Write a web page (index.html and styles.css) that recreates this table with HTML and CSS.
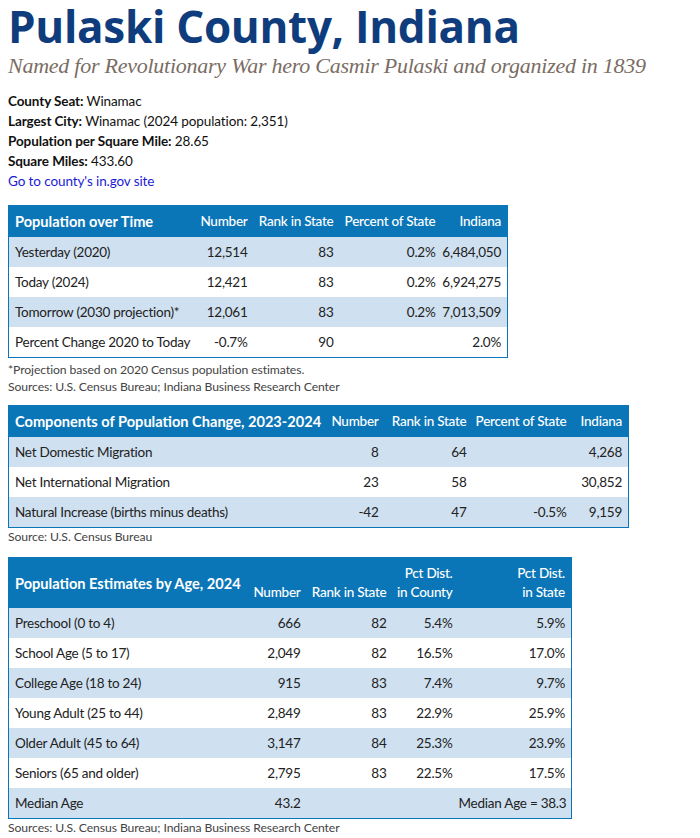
FILE: index.html
```html
<!DOCTYPE html>
<html lang="en">
<head>
<meta charset="utf-8">
<title>Pulaski County, Indiana</title>
<link rel="stylesheet" href="styles.css">
</head>
<body>
<h1 class="title">Pulaski County, Indiana</h1>
<p class="subtitle">Named for Revolutionary War hero Casmir Pulaski and organized in 1839</p>

<div class="facts">
  <div class="fact"><b>County Seat:</b> Winamac</div>
  <div class="fact"><b>Largest City:</b> Winamac (2024 population: 2,351)</div>
  <div class="fact"><b>Population per Square Mile:</b> 28.65</div>
  <div class="fact"><b>Square Miles:</b> 433.60</div>
  <div class="fact"><a class="link" href="#">Go to county's in.gov site</a></div>
</div>

<table class="data t1">
  <colgroup><col class="c1-0"><col class="c1-1"><col class="c1-2"><col class="c1-3"><col class="c1-4"></colgroup>
  <thead>
    <tr><th class="lead">Population over Time</th><th>Number</th><th>Rank in State</th><th>Percent of State</th><th>Indiana</th></tr>
  </thead>
  <tbody>
    <tr><td>Yesterday (2020)</td><td>12,514</td><td>83</td><td>0.2%</td><td>6,484,050</td></tr>
    <tr><td>Today (2024)</td><td>12,421</td><td>83</td><td>0.2%</td><td>6,924,275</td></tr>
    <tr><td>Tomorrow (2030 projection)*</td><td>12,061</td><td>83</td><td>0.2%</td><td>7,013,509</td></tr>
    <tr><td>Percent Change 2020 to Today</td><td>-0.7%</td><td>90</td><td></td><td>2.0%</td></tr>
  </tbody>
</table>
<p class="note note-first">*Projection based on 2020 Census population estimates.</p>
<p class="note">Sources: U.S. Census Bureau; Indiana Business Research Center</p>

<table class="data t2">
  <colgroup><col class="c2-0"><col class="c2-1"><col class="c2-2"><col class="c2-3"><col class="c2-4"></colgroup>
  <thead>
    <tr><th class="lead">Components of Population Change, 2023-2024</th><th>Number</th><th>Rank in State</th><th>Percent of State</th><th>Indiana</th></tr>
  </thead>
  <tbody>
    <tr><td>Net Domestic Migration</td><td>8</td><td>64</td><td></td><td>4,268</td></tr>
    <tr><td>Net International Migration</td><td>23</td><td>58</td><td></td><td>30,852</td></tr>
    <tr><td>Natural Increase (births minus deaths)</td><td>-42</td><td>47</td><td>-0.5%</td><td>9,159</td></tr>
  </tbody>
</table>
<p class="note">Source: U.S. Census Bureau</p>

<table class="data t3">
  <colgroup><col class="c3-0"><col class="c3-1"><col class="c3-2"><col class="c3-3"><col class="c3-4"></colgroup>
  <thead>
    <tr class="tall"><th class="lead">Population Estimates by Age, 2024</th><th class="bottom">Number</th><th class="bottom">Rank in State</th><th class="bottom">Pct Dist.<br>in County</th><th class="bottom">Pct Dist.<br>in State</th></tr>
  </thead>
  <tbody>
    <tr><td>Preschool (0 to 4)</td><td>666</td><td>82</td><td>5.4%</td><td>5.9%</td></tr>
    <tr><td>School Age (5 to 17)</td><td>2,049</td><td>82</td><td>16.5%</td><td>17.0%</td></tr>
    <tr><td>College Age (18 to 24)</td><td>915</td><td>83</td><td>7.4%</td><td>9.7%</td></tr>
    <tr><td>Young Adult (25 to 44)</td><td>2,849</td><td>83</td><td>22.9%</td><td>25.9%</td></tr>
    <tr><td>Older Adult (45 to 64)</td><td>3,147</td><td>84</td><td>25.3%</td><td>23.9%</td></tr>
    <tr><td>Seniors (65 and older)</td><td>2,795</td><td>83</td><td>22.5%</td><td>17.5%</td></tr>
    <tr><td>Median Age</td><td>43.2</td><td></td><td></td><td>Median Age = 38.3</td></tr>
  </tbody>
</table>
<p class="note">Sources: U.S. Census Bureau; Indiana Business Research Center</p>
</body>
</html>
```

FILE: styles.css
```css
body {
  margin: 0;
  padding: 0 8px;
  font-family: Lato, "Liberation Sans", sans-serif;
  color: #222;
  background: #fff;
}
.title {
  margin: 0;
  font-family: "Open Sans", Lato, sans-serif;
  font-size: 44px;
  line-height: 52px;
  font-weight: 700;
  color: #0e3c7c;
  letter-spacing: -0.3px;
}
.subtitle {
  margin: 0;
  font-family: "Liberation Serif", "DejaVu Serif", serif;
  font-style: italic;
  font-size: 22px;
  line-height: 28px;
  color: #7a6d64;
  letter-spacing: -0.25px;
  white-space: nowrap;
}
.facts {
  margin-top: 11px;
  font-size: 13.5px;
  line-height: 20px;
  color: #111;
  letter-spacing: -0.1px;
}
.fact b { font-weight: 700; }
.link { color: #1b1bd6; text-decoration: none; }

.data {
  border-collapse: collapse;
  border: 1px solid #0b76b7;
  font-size: 13.5px;
  letter-spacing: -0.25px;
  table-layout: fixed;
}
.t1 { margin-top: 14px; width: 499px; }
.t2 { margin-top: 10px; width: 620px; }
.t3 { margin-top: 12px; width: 563px; }

.data th {
  background: #0b76b7;
  color: #fff;
  font-weight: 500;
  text-align: right;
  padding: 0 6px 0 0;
  height: 31px;
  line-height: 17px;
  white-space: nowrap;
}
.data th.lead {
  text-align: left;
  font-weight: 700;
  padding-left: 6px;
  font-size: 14.6px;
  letter-spacing: 0;
}
.data tr.tall th { height: auto; }
.data th.bottom {
  vertical-align: bottom;
  padding-top: 6px;
  padding-bottom: 6px;
  line-height: 19px;
}
.data td {
  height: 30px;
  padding: 0 6px 0 0;
  line-height: 17px;
  text-align: right;
  white-space: nowrap;
}
.data td:first-child { text-align: left; padding-left: 6px; }
.data tbody tr:nth-child(odd) td { background: #cfe0f0; }

.c1-0 { width: 186px; } .c1-1 { width: 59px; } .c1-2 { width: 86px; } .c1-3 { width: 102px; } .c1-4 { width: 66px; }
.c2-0 { width: 317px; } .c2-1 { width: 59px; } .c2-2 { width: 88px; } .c2-3 { width: 100px; } .c2-4 { width: 56px; }
.c3-0 { width: 239px; } .c3-1 { width: 59px; } .c3-2 { width: 86px; } .c3-3 { width: 66px; } .c3-4 { width: 113px; }

.note {
  margin: 0;
  font-size: 12.2px;
  line-height: 17px;
  color: #444;
  letter-spacing: -0.1px;
}
.note-first { margin-top: 3px; }
```
